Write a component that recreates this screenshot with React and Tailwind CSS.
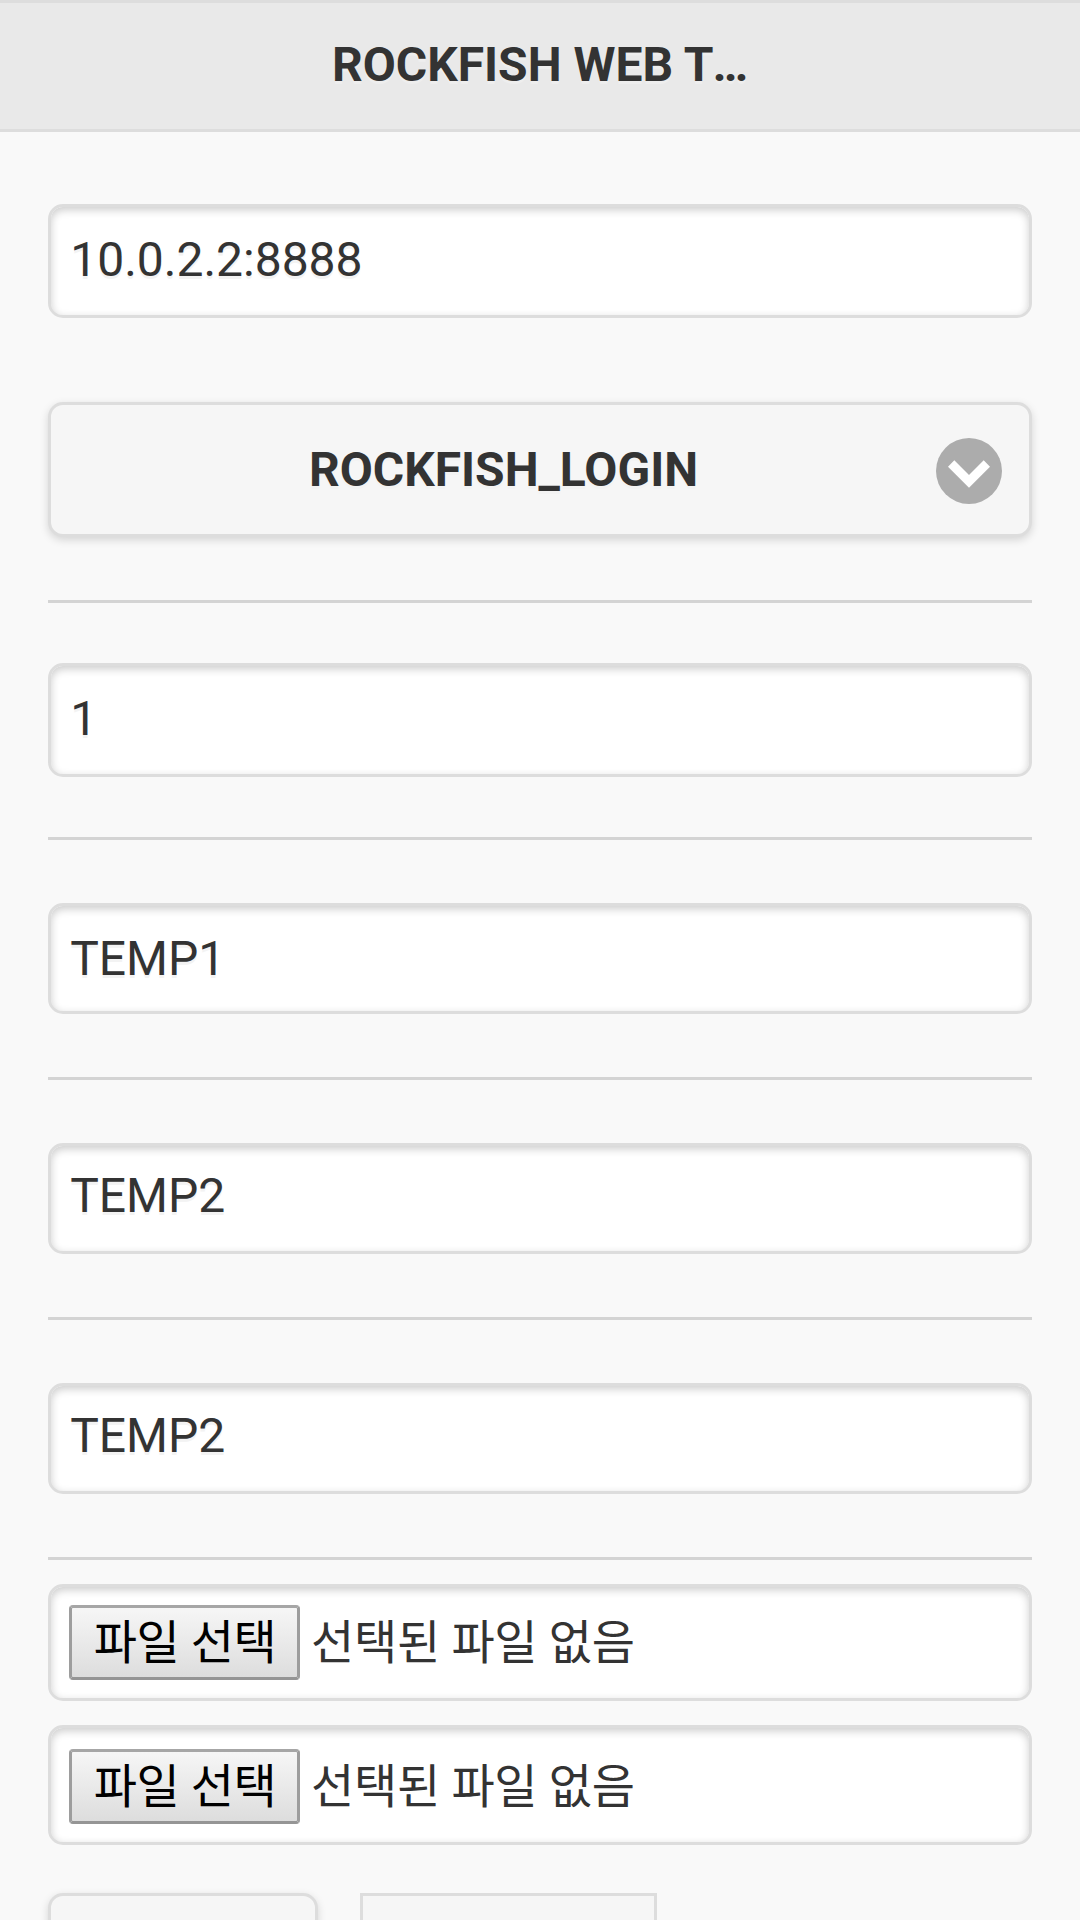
import React from "react";

function Divider({ className }) {
  return <hr className={`h-[3px] shrink-0 border-0 bg-[#d4d4d4] ${className}`} />;
}

function TextField({ value, className }) {
  return (
    <input
      type="text"
      defaultValue={value}
      className={`block w-full shrink-0 rounded-[15px] border-[3px] border-[#ddd] bg-white px-[19.2px] text-[48px] leading-[57px] text-[#333] shadow-[inset_0_3px_9px_rgba(0,0,0,0.2)] outline-none [text-shadow:0_3px_0_#f3f3f3] ${className}`}
    />
  );
}

function FileField({ className }) {
  return (
    <div
      className={`flex shrink-0 rounded-[15px] border-[3px] border-[#ddd] bg-white px-[18px] text-[47px] tracking-[-0.25px] text-[#333] shadow-[inset_0_3px_9px_rgba(0,0,0,0.2)] ${className}`}
    >
      <button className="h-[75px] w-[231px] rounded-[4px] border-[3px] border-t-[#a6a6a6] border-r-[#9d9d9d] border-b-[#959595] border-l-[#9d9d9d] bg-linear-to-b from-[#f6f6f6] to-[#dddddd] pl-px text-center leading-[69px] tracking-[-0.4px] whitespace-nowrap text-black">
        파일 선택
      </button>
      <span className="ml-[11px] leading-[75px] whitespace-nowrap">선택된 파일 없음</span>
    </div>
  );
}

export default function App() {
  return (
    <div className="flex h-[1920px] w-[1080px] flex-col overflow-hidden bg-[#f9f9f9] font-[Roboto,'Noto_Sans_CJK_KR',sans-serif] text-[#333]">
      <header className="flex h-[132px] shrink-0 justify-center border-y-[3px] border-[#ddd] bg-[#e9e9e9]">
        <h1 className="pt-[33px] text-[48px] leading-[57px] font-bold whitespace-nowrap [text-shadow:0_3px_0_#eee]">
          ROCKFISH WEB T<span className="-ml-px inline-block">…</span>
        </h1>
      </header>

      <main className="flex min-h-0 flex-1 flex-col px-12">
        <TextField value="10.0.2.2:8888" className="mt-[72px] h-[114px] pb-[3px]" />

        <button className="mt-[84px] flex h-[135px] shrink-0 items-start rounded-[15px] border-[3px] border-[#ddd] bg-[#f6f6f6] shadow-[0_3px_9px_rgba(0,0,0,0.15)]">
          <span className="flex-1 pt-[36px] pl-[20px] text-center text-[48px] leading-[57px] font-bold [text-shadow:0_3px_0_#f3f3f3]">
            ROCKFISH_LOGIN
          </span>
          <svg className="mt-[33px] mr-[27px] h-[66px] w-[66px]" viewBox="0 0 66 66">
            <circle cx="33" cy="33" r="33" fill="#acacac" />
            <path d="M12 28.7 18.3 22.3 33 37 47.7 22.3 54 28.7 33 49.7Z" fill="#fff" />
          </svg>
        </button>

        <Divider className="mt-[63px]" />
        <TextField value="1" className="mt-[60px] h-[114px] pb-[3px]" />
        <Divider className="mt-[60px]" />
        <TextField value="TEMP1" className="mt-[63px] h-[111px]" />
        <Divider className="mt-[63px]" />
        <TextField value="TEMP2" className="mt-[63px] h-[111px] pb-[6px]" />
        <Divider className="mt-[63px]" />
        <TextField value="TEMP2" className="mt-[63px] h-[111px] pb-[6px]" />
        <Divider className="mt-[63px]" />

        <FileField className="mt-[24px] h-[117px] pt-[18px]" />
        <FileField className="mt-[24px] h-[120px] pt-[21px]" />

        <div className="mt-[48px] flex shrink-0 gap-[42px]">
          <div className="h-[135px] w-[270px] rounded-[15px] border-[3px] border-[#ddd] bg-[#f6f6f6] shadow-[0_3px_9px_rgba(0,0,0,0.15)]" />
          <div className="h-[135px] w-[297px] border-[3px] border-[#ddd] bg-[#f6f6f6]" />
        </div>
      </main>
    </div>
  );
}
